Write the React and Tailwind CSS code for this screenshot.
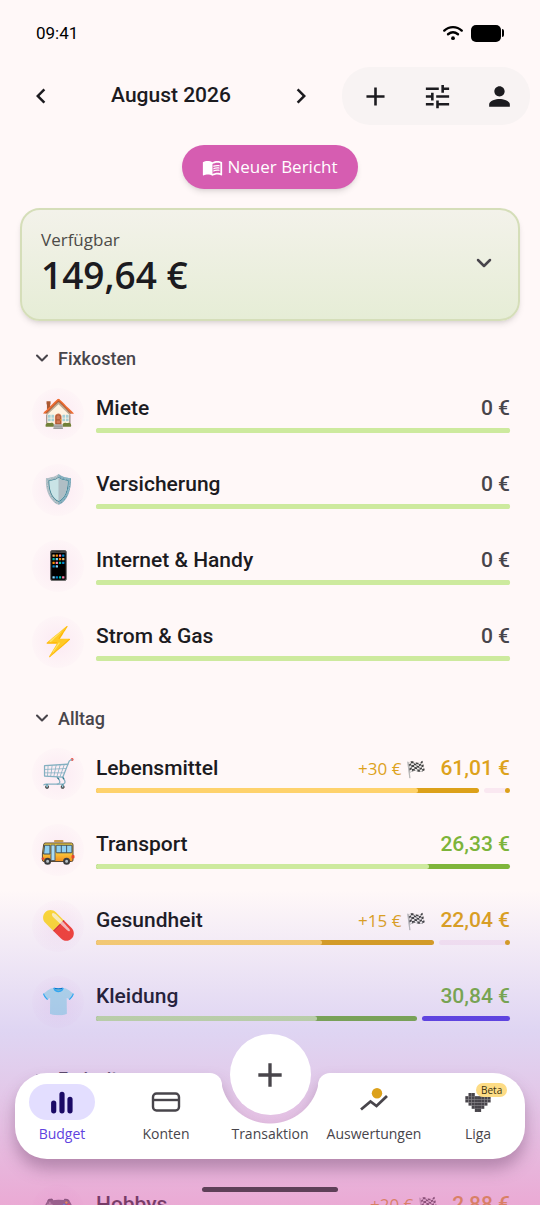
import {
  MdAdd,
  MdChevronLeft,
  MdChevronRight,
  MdMenuBook,
  MdPerson,
  MdTune,
} from "react-icons/md";
import { ChevronDown } from "lucide-react";

const SECTIONS = [
  {
    title: "Fixkosten",
    items: [
      { name: "Miete", icon: "🏠", amount: "0 €", tone: "idle" },
      { name: "Versicherung", icon: "🛡️", amount: "0 €", tone: "idle" },
      { name: "Internet & Handy", icon: "📱", amount: "0 €", tone: "idle" },
      { name: "Strom & Gas", icon: "⚡", amount: "0 €", tone: "idle" },
    ],
  },
  {
    title: "Alltag",
    items: [
      { name: "Lebensmittel", icon: "🛒", amount: "61,01 €", goal: "+30 €", tone: "gold", planned: 77.7, filled: 92.6, rest: "goal" },
      { name: "Transport", icon: "bus", amount: "26,33 €", tone: "green", planned: 80.4, filled: 100 },
      { name: "Gesundheit", icon: "💊", amount: "22,04 €", goal: "+15 €", tone: "gold", planned: 54.6, filled: 81.6, rest: "goal" },
      { name: "Kleidung", icon: "👕", amount: "30,84 €", tone: "green", planned: 53.4, filled: 77.6, rest: "saved" },
    ],
  },
  {
    title: "Freizeit",
    items: [
      null,
      { name: "Hobbys", icon: "🎮", amount: "2,88 €", goal: "+20 €", tone: "gold", planned: 60, filled: 90, rest: "goal" },
    ],
  },
];

const TONES = {
  idle: { text: "text-[#48454b]", light: "bg-[#cdea9e]", dark: "bg-[#cdea9e]" },
  green: { text: "text-[#7cb43a]", light: "bg-[#cdea9e]", dark: "bg-[#7fb53b]" },
  gold: { text: "text-[#dda21c]", light: "bg-[#fed26c]", dark: "bg-[#dca11a]" },
};

const StatusBar = () => (
  <div className="flex items-start justify-between px-9 pt-5 pb-[21px] text-[17px] leading-[26px] text-black">
    <span>09:41</span>
    <div className="flex h-[26px] items-center gap-2">
      <svg viewBox="0 0 20 16" className="h-4 w-5" fill="none" stroke="black" strokeLinecap="round">
        <path d="M1.3 5.6C6.2 0.9 13.8 0.9 18.7 5.6" strokeWidth="2.4" />
        <path d="M5 9.2C8 6.8 12 6.8 15 9.2" strokeWidth="2.4" />
        <circle cx="10" cy="13.2" r="1.9" fill="black" stroke="none" />
      </svg>
      <div className="flex items-center gap-px">
        <span className="h-[17px] w-[30px] rounded-[5px] bg-black" />
        <span className="h-2 w-[2px] rounded-r-sm bg-black" />
      </div>
    </div>
  </div>
);

const MonthHeader = () => (
  <header className="flex items-center pr-[10px]">
    <div className="flex flex-1 items-center justify-between px-[26px]">
      <button type="button" aria-label="Vorheriger Monat">
        <MdChevronLeft size={30} />
      </button>
      <h1 className="text-[21px] font-medium">August 2026</h1>
      <button type="button" aria-label="Nächster Monat">
        <MdChevronRight size={30} />
      </button>
    </div>
    <div className="flex h-[58px] w-[188px] items-center justify-around rounded-[28px] bg-[#f8f3f3] pl-[2px]">
      <button type="button" aria-label="Hinzufügen">
        <MdAdd size={31} />
      </button>
      <button type="button" aria-label="Filter">
        <MdTune size={31} />
      </button>
      <button type="button" aria-label="Profil">
        <MdPerson size={31} />
      </button>
    </div>
  </header>
);

const Progress = ({ item }) => {
  const tone = TONES[item.tone];
  const filled = item.filled ?? 100;
  return (
    <div className="mt-[5px] flex h-[5px] gap-[5px]">
      <div className={`h-full rounded-full ${tone.dark}`} style={{ width: `${filled}%` }}>
        <div
          className={`h-full rounded-full ${tone.light}`}
          style={{ width: `${((item.planned ?? 100) / filled) * 100}%` }}
        />
      </div>
      {item.rest === "goal" && (
        <div className="flex flex-1 justify-end rounded-full bg-[#fae8f1]">
          <span className="h-[5px] w-[5px] rounded-full bg-[#dca11a]" />
        </div>
      )}
      {item.rest === "saved" && <div className="flex-1 rounded-full bg-[#5f43e0]" />}
    </div>
  );
};

const BusIcon = () => (
  <svg viewBox="0 0 34 34" className="h-[34px] w-[34px]">
    <defs>
      <linearGradient id="bus-body" x1="0" y1="0" x2="0" y2="1">
        <stop offset="0.45" stopColor="#fdd640" />
        <stop offset="1" stopColor="#f08c1e" />
      </linearGradient>
    </defs>
    <rect x="13" y="7" width="9.5" height="2.2" rx="1" fill="#c99a4b" />
    <path
      d="M4 10H30.5Q32 10 32 12V27Q32 28.5 30.5 28.5H3Q1.4 28.5 1.4 27V21L2.6 12Q2.8 10 4 10Z"
      fill="url(#bus-body)"
      stroke="#5b4a35"
      strokeWidth="1"
    />
    <path d="M3.6 12.2H9V21H2.6Z" fill="#8fd0f2" stroke="#3f4b55" strokeWidth="1" />
    <rect x="10" y="12" width="4" height="15.5" fill="#a9dcf5" stroke="#4b5560" strokeWidth="0.9" />
    <rect x="15" y="12.2" width="16" height="7.6" rx="0.8" fill="#8fd0f2" stroke="#3f4b55" strokeWidth="1" />
    <path d="M20.3 12.2V19.8M25.6 12.2V19.8" stroke="#3f4b55" strokeWidth="0.9" />
    <rect x="30.5" y="22" width="3" height="3.4" rx="1" fill="#e5482f" />
    <rect x="0.6" y="24.6" width="2.8" height="2.2" rx="1" fill="#e5482f" />
    <g fill="#b9c3c9" stroke="#3c3c3e" strokeWidth="2">
      <circle cx="6.6" cy="28.2" r="2.5" />
      <circle cx="25.6" cy="28.2" r="2.5" />
    </g>
  </svg>
);

const BudgetRow = ({ item }) => (
  <li className="flex gap-3">
    <span className="flex h-[52px] w-[52px] shrink-0 items-center justify-center rounded-full bg-radial from-[#fcedf4] from-20% to-[#fef5f7] to-70% text-[28px] leading-none">
      {item.icon === "bus" ? <BusIcon /> : item.icon}
    </span>
    <div className="min-w-0 flex-1 pt-[7px]">
      <div className="flex h-7 items-center text-[21px] font-medium">
        <span className="flex-1">{item.name}</span>
        {item.goal && (
          <span className={`mr-[14px] flex items-center gap-[5px] font-['Open_Sans',sans-serif] text-[17px] font-normal ${TONES[item.tone].text}`}>
            {item.goal} <span className="text-base">🏁</span>
          </span>
        )}
        <span className={TONES[item.tone].text}>{item.amount}</span>
      </div>
      <Progress item={item} />
    </div>
  </li>
);

const BudgetSection = ({ section }) => (
  <section>
    <button type="button" className="flex h-6 items-center gap-[6px] text-[18px] font-medium text-[#48454b]">
      <ChevronDown size={20} strokeWidth={2.5} />
      {section.title}
    </button>
    <ul className="mt-[18px] flex flex-col gap-6">
      {section.items.map((item, i) =>
        item ? <BudgetRow key={item.name} item={item} /> : <li key={i} className="h-[52px]" />
      )}
    </ul>
  </section>
);

const BudgetIcon = () => (
  <svg viewBox="0 0 24 24" className="h-6 w-6" stroke="#1b0a66" strokeWidth="5.2" strokeLinecap="round">
    <path d="M3.7 13V20.8M12 4.4V20.8M20 9.4V20.8" />
  </svg>
);

const CardIcon = () => (
  <svg viewBox="0 0 30 20" className="h-5 w-[30px]" fill="none" stroke="#48454b" strokeWidth="2.4">
    <rect x="2" y="1.5" width="26" height="17" rx="3.5" />
    <path d="M2 8H28" />
  </svg>
);

const TrendIcon = () => (
  <svg viewBox="0 0 30 26" className="h-[26px] w-[30px] overflow-visible" fill="none">
    <path d="M2 20.5L11.5 12.5L17.5 17L28 7" stroke="#48454b" strokeWidth="2.8" />
    <circle cx="18" cy="4.2" r="5.2" fill="#dca11a" />
  </svg>
);

const HEART = [
  ".XX..XX.",
  "XXXXXXXX",
  "XXXXXXXX",
  ".XXXXXX.",
  "..XXXX..",
  "...XX...",
];

const HeartIcon = () => (
  <svg viewBox="0 0 80 60" className="h-[19px] w-[26px]" fill="#48454b">
    {HEART.map((row, y) =>
      [...row].map(
        (cell, x) =>
          cell === "X" && (
            <rect key={`${x}-${y}`} x={x * 10} y={y * 10} width="9.9" height="9.9" />
          )
      )
    )}
  </svg>
);

const NAV_ITEMS = [
  { label: "Budget", icon: <BudgetIcon />, active: true },
  { label: "Konten", icon: <CardIcon /> },
  { label: "Transaktion" },
  { label: "Auswertungen", icon: <TrendIcon /> },
  { label: "Liga", icon: <HeartIcon />, badge: "Beta" },
];

const BottomNav = () => (
  <nav className="grid px-[10px] font-['Open_Sans',sans-serif]">
    {/* bar with the round cut-out for the action button */}
    <div className="col-start-1 row-start-1 mx-[5px] flex h-[86px] self-end drop-shadow-[0_10px_8px_rgba(70,30,70,0.32)]">
      <div className="flex-1 rounded-l-[32px] rounded-tr-xl bg-white" />
      <div className="w-24 bg-[radial-gradient(circle_at_50%_1px,transparent_49px,white_50px)]" />
      <div className="flex-1 rounded-r-[32px] rounded-tl-xl bg-white" />
    </div>
    <ul className="relative col-start-1 row-start-1 grid grid-cols-5">
      {NAV_ITEMS.map((item) => (
        <li key={item.label} className="flex flex-col justify-end pb-[15px]">
          <a
            href="#"
            className={`flex flex-col items-center text-sm leading-5 ${
              item.active ? "text-[#5f43e0]" : "text-[#48454b]"
            }`}
          >
            {item.icon ? (
              <span
                className={`relative mb-1 flex h-9 w-[66px] items-center justify-center rounded-full ${
                  item.active ? "bg-[#e3deff]" : ""
                }`}
              >
                {item.icon}
                {item.badge && (
                  <span className="absolute -top-px left-[31px] rounded-full bg-[#fddc85] px-[5px] text-[10px] leading-[14px] text-[#3a3110]">
                    {item.badge}
                  </span>
                )}
              </span>
            ) : (
              <span className="mb-[9px] flex h-[81px] w-[81px] items-center justify-center rounded-full bg-white">
                <MdAdd size={40} />
              </span>
            )}
            {item.label}
          </a>
        </li>
      ))}
    </ul>
  </nav>
);

export default function App() {
  return (
    <div className="relative h-screen overflow-hidden bg-[#fff8f8] font-['Roboto',sans-serif] text-[#1c1b1f]">
      <StatusBar />
      <MonthHeader />

      <main>
        <button
          type="button"
          className="mx-auto mt-5 flex h-11 items-center gap-1 rounded-full bg-[#d65db1] px-5 font-['Open_Sans',sans-serif] text-[17px] text-white shadow-md"
        >
          <MdMenuBook size={21} />
          Neuer Bericht
        </button>

        <button
          type="button"
          className="mx-5 mt-[19px] flex h-[113px] w-[calc(100%-40px)] items-center justify-between rounded-[20px] border-2 border-[#d5deb9] bg-linear-to-b from-[#f3f2ea] to-[#e6edd6] pb-[3px] pl-[19px] pr-[22px] text-left font-['Open_Sans',sans-serif] shadow-md"
        >
          <span className="flex flex-col">
            <span className="text-[17px] leading-6 text-[#4c4b48]">Verfügbar</span>
            <span className="text-[37px] leading-[46px] font-semibold">149,64 €</span>
          </span>
          <ChevronDown size={24} strokeWidth={2.5} color="#48454b" />
        </button>

        <div className="mt-[25px] flex flex-col gap-[38px] pl-8 pr-[30px]">
          {SECTIONS.map((section) => (
            <BudgetSection key={section.title} section={section} />
          ))}
        </div>
      </main>

      {/* tinted fade with the floating navigation on top */}
      <div className="pointer-events-none absolute inset-x-0 bottom-0 h-[315px] bg-linear-to-b from-[#5d47dd00] via-[#5d47dd33] via-45% to-[#d65db180]" />
      <div className="absolute inset-x-0 bottom-0 flex flex-col">
        <BottomNav />
        <div className="flex h-[46px] items-end justify-center pb-[13px]">
          <span className="h-[5px] w-[136px] rounded-full bg-[#5e4058]" />
        </div>
      </div>
    </div>
  );
}
